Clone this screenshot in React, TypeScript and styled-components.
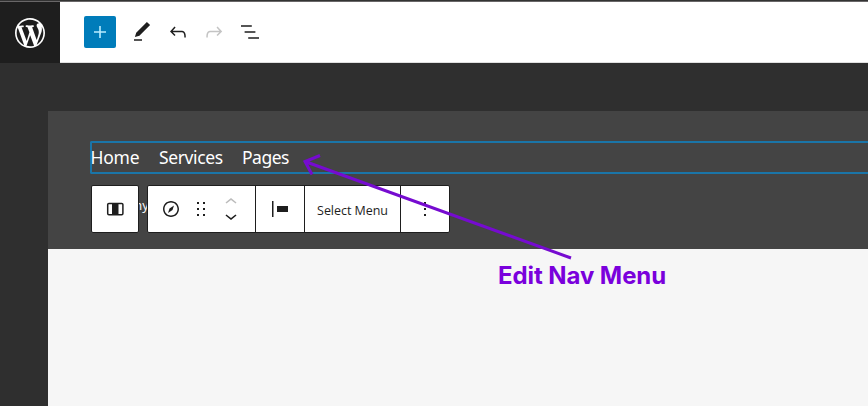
import React from 'react';
import styled, { createGlobalStyle } from 'styled-components';

const GlobalStyle = createGlobalStyle`
  * { box-sizing: border-box; }
  body { margin: 0; overflow: hidden; font-family: "Open Sans", "Noto Sans", sans-serif; }
`;

const Page = styled.div`
  position: relative;
  display: flex;
  flex-direction: column;
  width: 868px;
  height: 406px;
  overflow: hidden;
  background: #2f2f2f;
`;

const TopBar = styled.header`
  display: flex;
  flex: none;
  height: 63px;
  background: #fff;
  border-top: 1px solid #333;
  border-bottom: 1px solid #e0e0e0;
  box-shadow: inset 0 1px 0 #696768;
`;

const SiteLogo = styled.div`
  display: flex;
  align-items: center;
  justify-content: center;
  width: 60px;
  height: 61px;
  margin-top: 1px;
  padding-top: 1px;
  background: #1e1e1e;
  color: #fff;
`;

const Tools = styled.div`
  display: flex;
  align-items: center;
  padding: 1px 0 0 24px;
`;

const InsertButton = styled.button`
  display: flex;
  align-items: center;
  justify-content: center;
  width: 32px;
  height: 32px;
  margin: 0 8px 0 0;
  padding: 0;
  border: 0;
  border-radius: 2px;
  background: #007cba;
  color: #b9ecff;
`;

const ToolButton = styled.button<{ $muted?: boolean }>`
  display: flex;
  align-items: center;
  justify-content: center;
  width: 36px;
  height: 36px;
  padding: 0;
  border: 0;
  background: none;
  color: ${(p) => (p.$muted ? '#c4c4c4' : '#1e1e1e')};
`;

const Canvas = styled.main`
  flex: 1;
  margin: 48px 0 0 48px;
  background: #f6f6f6;
`;

const SiteHeader = styled.section`
  position: relative;
  height: 138px;
  padding: 30px 0 0 42px;
  background: #444;
`;

const Navigation = styled.nav`
  display: flex;
  align-items: flex-start;
  height: 33px;
  border: 2px solid #1a75a8;
  border-right: 0;
  border-radius: 2px 0 0 2px;
`;

const NavItem = styled.span<{ $width: number; $gap: number; $spacing: number }>`
  width: ${(p) => p.$width}px;
  margin-right: ${(p) => p.$gap}px;
  font-family: "Noto Sans", "Open Sans", sans-serif;
  font-size: 17.5px;
  line-height: 28px;
  letter-spacing: ${(p) => p.$spacing}px;
  white-space: nowrap;
  color: #fff;
  &:first-child { margin-left: -1.4px; }
`;

const Tagline = styled.div`
  margin: 22px 0 0 1px;
  width: 56px;
  font-size: 13px;
  line-height: 18px;
  text-align: right;
  color: #fff;
`;

const BlockToolbar = styled.div`
  position: absolute;
  left: 43px;
  top: 74px;
  display: flex;
  gap: 8px;
`;

const ToolbarBox = styled.div`
  display: flex;
  height: 48px;
  border: 1px solid #1e1e1e;
  border-radius: 2px;
  background: #fff;
  color: #1e1e1e;
`;

const Group = styled.div<{ $width: number; $last?: boolean }>`
  display: flex;
  align-items: center;
  justify-content: center;
  width: ${(p) => p.$width}px;
  border-right: ${(p) => (p.$last ? 0 : 1)}px solid #1e1e1e;
`;

const Slot = styled.div<{ $width: number }>`
  display: flex;
  justify-content: center;
  width: ${(p) => p.$width}px;
`;

const Movers = styled.div`
  display: flex;
  flex-direction: column;
  align-items: center;
  width: 24px;
  margin: 0 8px 0 6px;
`;

const Mover = styled.div<{ $muted?: boolean }>`
  display: flex;
  align-items: center;
  height: 14px;
  color: ${(p) => (p.$muted ? '#bcbcbc' : '#1e1e1e')};
`;

const SelectLabel = styled.span`
  font-size: 12.5px;
  line-height: 18px;
  letter-spacing: -0.05px;
  padding-top: 3px;
  white-space: nowrap;
`;

const Arrow = styled.svg`
  position: absolute;
  left: 296px;
  top: 148px;
`;

const Annotation = styled.div`
  position: absolute;
  left: 498px;
  top: 261px;
  font: 700 24px/30px Inter, sans-serif;
  letter-spacing: -0.08px;
  white-space: nowrap;
  color: #7a00dc;
`;

const shapes = {
  wordpress:
    'M20 10c0-5.51-4.49-10-10-10C4.48 0 0 4.49 0 10c0 5.52 4.48 10 10 10 5.51 0 10-4.48 10-10zM7.78 15.37L4.37 6.22c.55-.02 1.17-.08 1.17-.08.5-.06.44-1.13-.06-1.11 0 0-1.45.11-2.37.11-.18 0-.37 0-.58-.01C4.12 2.69 6.87 1.11 10 1.11c2.33 0 4.45.87 6.05 2.34-.68-.11-1.65.39-1.65 1.58 0 .74.45 1.36.9 2.1.35.61.55 1.36.55 2.46 0 1.49-1.4 5-1.4 5l-3.03-8.37c.54-.02.82-.17.82-.17.5-.05.44-1.25-.06-1.22 0 0-1.44.12-2.38.12-.87 0-2.33-.12-2.33-.12-.5-.03-.56 1.2-.06 1.22l.92.08 1.26 3.41zM17.41 10c.24-.64.74-1.87.43-4.25.7 1.29 1.05 2.71 1.05 4.25 0 3.29-1.73 6.24-4.4 7.78.97-2.59 1.94-5.2 2.92-7.78zM6.1 18.09C3.12 16.65 1.11 13.53 1.11 10c0-1.3.23-2.48.72-3.59C3.25 10.3 4.67 14.2 6.1 18.09zm4.03-6.63l2.58 6.98c-.86.29-1.76.45-2.71.45-.79 0-1.57-.11-2.29-.33.81-2.38 1.62-4.74 2.42-7.1z',
  plus: 'M18 11.2h-5.2V6h-1.6v5.2H6v1.6h5.2V18h1.6v-5.2H18z',
  edit: 'M20.1 5.1L16.9 2 6.2 12.7l-1.3 4.4 4.5-1.3L20.1 5.1zM4 20.8h8v-1.5H4v1.5z',
  undo: 'M18.3 11.7c-.6-.6-1.4-.9-2.3-.9H6.7l2.9-3.3-1.1-1-4.5 5L8.5 16l1-1-2.7-2.7H16c.5 0 .9.2 1.3.5 1 1 1 3.4 1 4.5v.3h1.5v-.2c0-1.5 0-4.3-1.5-5.7z',
  redo: 'M15.6 6.5l-1.1 1 2.9 3.3H8c-.9 0-1.7.3-2.3.9-1.4 1.5-1.4 4.2-1.4 5.6v.2h1.5v-.3c0-1.1 0-3.5 1-4.5.3-.3.7-.5 1.3-.5h9.2L14.5 15l1.1 1.1 4.6-4.6-4.6-5z',
  listView:
    'M13.8 5.2H3v1.5h10.8V5.2zm-3.6 12v1.5H21v-1.5H10.2zm7.2-6H6.6v1.5h10.8v-1.5z',
  compass:
    'M12 4c-4.4 0-8 3.6-8 8s3.6 8 8 8 8-3.6 8-8-3.6-8-8-8zm0 14.5c-3.6 0-6.5-2.9-6.5-6.5S8.4 5.5 12 5.5s6.5 2.9 6.5 6.5-2.9 6.5-6.5 6.5zM9 16l4.5-3L15 8.4l-4.5 3L9 16z',
  drag: 'M8 7h2V5H8v2zm0 6h2v-2H8v2zm0 6h2v-2H8v2zm6-14v2h2V5h-2zm0 8h2v-2h-2v2zm0 6h2v-2h-2v2z',
  up: 'M6.5 12.4L12 8l5.5 4.4-.9 1.2L12 10l-4.5 3.6-1-1.2z',
  down: 'M17.5 11.6L12 16l-5.5-4.4.9-1.2L12 14l4.5-3.6 1 1.2z',
  justifyLeft: 'M9 9v6h11V9H9zM4 20h1.5V4H4v16z',
  more: 'M13 19h-2v-2h2v2zm0-6h-2v-2h2v2zm0-6h-2V5h2v2z',
};

const Icon = ({ name }: { name: keyof typeof shapes }) => (
  <svg width="24" height="24" viewBox="0 0 24 24" fill="currentColor">
    <path d={shapes[name]} />
  </svg>
);

const RowBlockIcon = () => (
  <svg width="24" height="24" viewBox="0 0 24 24" fill="none">
    <rect x="4.7" y="6.4" width="15.2" height="11.3" rx="1.2" stroke="#1e1e1e" strokeWidth="1.5" />
    <path d="M9 6h6.5v12H9z" fill="#1e1e1e" />
  </svg>
);

export default function App() {
  return (
    <>
      <GlobalStyle />
      <Page>
        <TopBar>
          <SiteLogo>
            <svg width="36" height="36" viewBox="-2 -2 24 24" fill="currentColor">
              <path d={shapes.wordpress} />
            </svg>
          </SiteLogo>
          <Tools>
            <InsertButton><Icon name="plus" /></InsertButton>
            <ToolButton><Icon name="edit" /></ToolButton>
            <ToolButton><Icon name="undo" /></ToolButton>
            <ToolButton $muted><Icon name="redo" /></ToolButton>
            <ToolButton><Icon name="listView" /></ToolButton>
          </Tools>
        </TopBar>
        <Canvas>
          <SiteHeader>
            <Navigation>
              <NavItem $width={48.4} $gap={20} $spacing={-0.3}>Home</NavItem>
              <NavItem $width={64} $gap={19} $spacing={-0.38}>Services</NavItem>
              <NavItem $width={48} $gap={0} $spacing={-0.5}>Pages</NavItem>
            </Navigation>
            <Tagline>Company</Tagline>
            <BlockToolbar>
              <ToolbarBox>
                <Group $width={46} $last><RowBlockIcon /></Group>
              </ToolbarBox>
              <ToolbarBox>
                <Group $width={108}>
                  <Slot $width={36}><Icon name="compass" /></Slot>
                  <Slot $width={24}><Icon name="drag" /></Slot>
                  <Movers>
                    <Mover $muted><Icon name="up" /></Mover>
                    <Mover><Icon name="down" /></Mover>
                  </Movers>
                </Group>
                <Group $width={49}><Icon name="justifyLeft" /></Group>
                <Group $width={96}><SelectLabel>Select Menu</SelectLabel></Group>
                <Group $width={48} $last><Icon name="more" /></Group>
              </ToolbarBox>
            </BlockToolbar>
          </SiteHeader>
        </Canvas>
        <Arrow width="284" height="118" viewBox="296 148 284 118" fill="none" stroke="#760bd0" strokeWidth="3">
          <path d="M571 258L305 161.500M320 155.500L305 161.500L312 174.500" />
        </Arrow>
        <Annotation>Edit Nav Menu</Annotation>
      </Page>
    </>
  );
}
